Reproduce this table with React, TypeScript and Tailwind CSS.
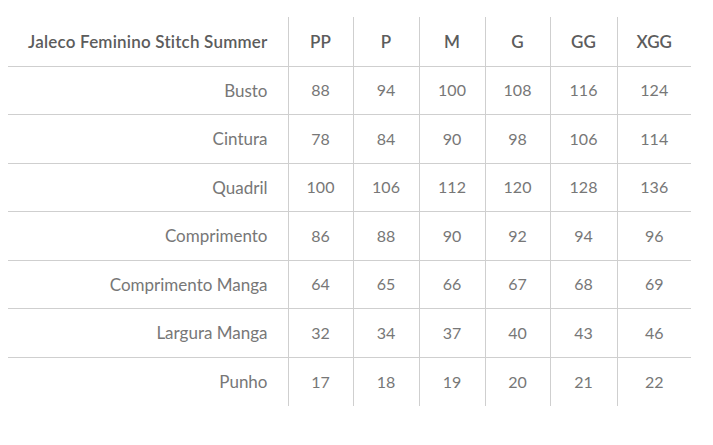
import React from "react";

const sizes = ["PP", "P", "M", "G", "GG", "XGG"];
const rows: [string, number[]][] = [
  ["Busto", [88, 94, 100, 108, 116, 124]],
  ["Cintura", [78, 84, 90, 98, 106, 114]],
  ["Quadril", [100, 106, 112, 120, 128, 136]],
  ["Comprimento", [86, 88, 90, 92, 94, 96]],
  ["Comprimento Manga", [64, 65, 66, 67, 68, 69]],
  ["Largura Manga", [32, 34, 37, 40, 43, 46]],
  ["Punho", [17, 18, 19, 20, 21, 22]],
];
const widths = ["w-[280px]", "w-[65px]", "w-[66px]", "w-[66px]", "w-[65px]", "w-[67px]", "w-[74px]"];

export default function App() {
  return (
    <div className="w-[713px] h-[445px] bg-white pt-[17px] pl-[8px] font-['Lato',sans-serif] text-[16px] text-[#777777]">
      <table className="border-collapse table-fixed w-[683px]">
        <colgroup>
          {widths.map((w, i) => (
            <col key={i} className={w} />
          ))}
        </colgroup>
        <thead>
          <tr className="h-[49px]">
            <th className="text-right pr-[20px] text-[17px] tracking-[0.2px] font-semibold text-[#5c5c5c] border-b border-[#cfcfcf]">
              Jaleco Feminino Stitch Summer
            </th>
            {sizes.map((s) => (
              <th key={s} className="text-center text-[17px] font-semibold text-[#5c5c5c] border-b border-l border-[#cfcfcf]">
                {s}
              </th>
            ))}
          </tr>
        </thead>
        <tbody>
          {rows.map(([name, vals], ri) => (
            <tr key={name} className="h-[48.5px]">
              <td className={`text-right pr-[20px] text-[17px] border-[#cfcfcf] ${ri < rows.length - 1 ? "border-b" : ""}`}>{name}</td>
              {vals.map((v, i) => (
                <td key={i} className={`text-center border-l border-[#cfcfcf] ${ri < rows.length - 1 ? "border-b" : ""}`}>
                  {v}
                </td>
              ))}
            </tr>
          ))}
        </tbody>
      </table>
    </div>
  );
}
